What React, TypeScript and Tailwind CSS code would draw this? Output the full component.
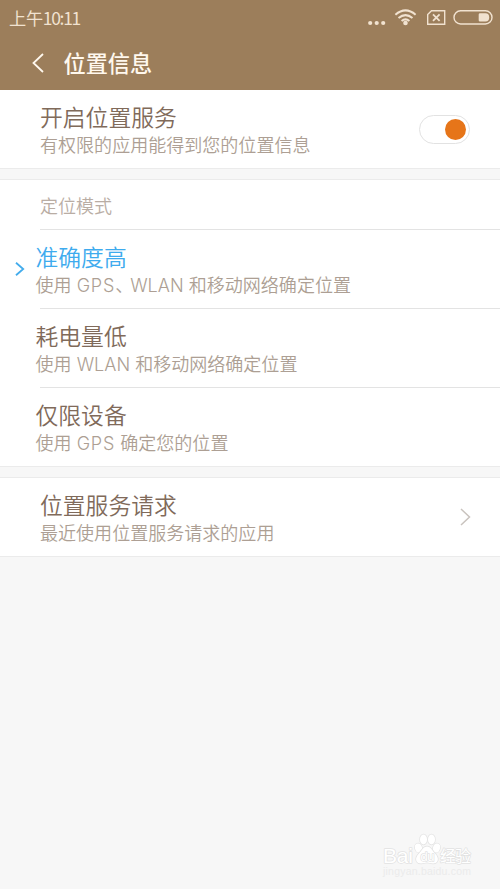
import React from "react";

const cjk = "font-['Noto_Sans_CJK_SC',sans-serif]";
const mixed = "font-['Inter','Noto_Sans_CJK_SC',sans-serif]";

function StatusBar() {
  return (
    <div className="flex h-9 items-center justify-between pr-[7px] pl-[9px] text-[#f1e2d0]">
      <span className="text-[17.2px] leading-6 tracking-[-0.3px] font-['Noto_Sans_CJK_SC',sans-serif]">
        上午<span className="text-[17.5px] tracking-[-1.3px]">10:11</span>
      </span>
      <svg width="128" height="24" viewBox="0 0 128 24" fill="none" stroke="currentColor">
        <g fill="currentColor" stroke="none">
          <circle cx="5.2" cy="17" r="2.1" />
          <circle cx="11.7" cy="17" r="2.1" />
          <circle cx="18.2" cy="17" r="2.1" />
          <circle cx="40.5" cy="17" r="2.3" />
          <path d="M115 7.3h5.5q3.7 0 3.7 4.1t-3.7 4.1H115q-1.3 0-1.3-1.2V8.5q0-1.2 1.3-1.2z" />
        </g>
        <g strokeWidth="2">
          <path d="M30.4 8.7Q40.5 .1 50.6 8.7" />
          <path d="M33.5 12Q40.5 6.2 47.5 12" />
          <path d="M36.6 15Q40.5 11.8 44.4 15" />
        </g>
        <path strokeWidth="1.4" d="M66.5 4.7H79.7V18.3H62.7V8.5Z" />
        <path strokeWidth="1.8" d="m68 8.3 6.6 6.6m0-6.6L68 14.9" />
        <rect x="89" y="4.8" width="38" height="13.2" rx="6.6" strokeWidth="1.4" />
      </svg>
    </div>
  );
}

function Label({ title, detail, active = false }: { title: string; detail: React.ReactNode; active?: boolean }) {
  return (
    <div className="pt-[7px]">
      <div className={`${cjk} text-[22.8px] leading-[27px] font-[350] ${active ? "text-[#3eabee]" : "text-[#806a5a]"}`}>
        {title}
      </div>
      <div className={`${mixed} text-[18.05px] leading-[32px] font-[350] whitespace-nowrap text-[#ad9f94]`}>{detail}</div>
    </div>
  );
}

function Row({ title, detail, active = false }: { title: string; detail: React.ReactNode; active?: boolean }) {
  return (
    <div className="flex h-[78px] items-center">
      <div className="flex w-[35.5px] shrink-0 justify-end pr-[11px]">
        {active && (
          <svg width="10" height="14" viewBox="0 0 10 14" fill="none" stroke="#43acec" strokeWidth="1.8">
            <path d="m1 .8 7.2 6.2L1 13.2" />
          </svg>
        )}
      </div>
      <Label title={title} detail={detail} active={active} />
    </div>
  );
}

const Divider = () => <div className="ml-10 h-px bg-[#e3e3e3]" />;

const Gps = () => <span className="tracking-[0.8px]">GPS</span>;

function Watermark() {
  return (
    <svg width="92" height="48" viewBox="0 0 92 48" className="absolute right-[26px] bottom-[8px]">
      <g fill="#ffffff" stroke="#e2e2e2" strokeWidth="1.4" paintOrder="stroke" strokeLinejoin="round">
        <text x="1" y="30" fontSize="21" fontWeight="400" fontFamily="Liberation Sans" textLength="30">Bai</text>
        <ellipse cx="36.5" cy="15" rx="3.5" ry="4.6" transform="rotate(-15 36.5 15)" />
        <ellipse cx="41.5" cy="6.5" rx="3.5" ry="5" />
        <ellipse cx="49.5" cy="6.5" rx="3.5" ry="5" />
        <ellipse cx="54.5" cy="15" rx="3.5" ry="4.6" transform="rotate(15 54.5 15)" />
        <path d="M45 13.5c4 0 5 4 8 7 5 5 3 10-2 10-3 0-4-1-6-1s-3 1-6 1c-5 0-7-5-2-10 3-3 4-7 8-7Z" />
        <text x="38.5" y="28" fontSize="13" fontWeight="400" fontFamily="Liberation Sans" textLength="14">du</text>
        <text x="58" y="29" fontSize="16" fontWeight="400" fontFamily="Noto Sans CJK SC" textLength="31">经验</text>
      </g>
      <text x="1" y="42" fontSize="10.5" fill="#ebebeb" fontFamily="Liberation Sans" textLength="88">jingyan.baidu.com</text>
    </svg>
  );
}

export default function App() {
  return (
    <main className="relative h-[889px] w-[500px] overflow-hidden bg-[#f7f7f7]">
      <header className="h-[90px] bg-[#9c7e5b]">
        <StatusBar />
        <div className="flex h-[54px] items-center pl-8">
          <svg width="12" height="20" viewBox="0 0 12 20" fill="none" stroke="#fff8ee" strokeWidth="1.8">
            <path d="M11 1 1.5 10 11 19" />
          </svg>
          <h1 className={`${cjk} -mt-[2px] ml-[19.5px] text-[22.2px] leading-8 font-medium text-[#fff8ee]`}>位置信息</h1>
        </div>
      </header>

      <section className="flex h-[79px] items-center justify-between border-b border-[#ebebeb] bg-white pr-[30px] pl-10">
        <Label title="开启位置服务" detail="有权限的应用能得到您的位置信息" />
        <div className="flex h-[29px] w-[51px] items-center justify-end rounded-full border border-[#e2e2e2] pr-[3px]">
          <div className="size-[21px] rounded-full bg-[#e67519]" />
        </div>
      </section>

      <section className="mt-[10px] border-y border-[#ebebeb] bg-white">
        <div className={`${mixed} flex h-[49px] items-center pt-[4px] pl-10 text-[18px] leading-7 font-[350] text-[#b9ada4]`}>定位模式</div>
        <Divider />
        <Row
          title="准确度高"
          detail={<>使用 <Gps /><span className="mr-[6px] [font-feature-settings:'halt']">、</span>WLAN 和移动网络确定位置</>}
          active
        />
        <Divider />
        <Row title="耗电量低" detail="使用 WLAN 和移动网络确定位置" />
        <Divider />
        <Row title="仅限设备" detail={<>使用 <Gps /> 确定您的位置</>} />
      </section>

      <section className="mt-[10px] flex h-[80px] items-center justify-between border-y border-[#ebebeb] bg-white pr-[29px] pl-10">
        <Label title="位置服务请求" detail="最近使用位置服务请求的应用" />
        <svg width="11" height="18" viewBox="0 0 11 18" fill="none" stroke="#c9c3be" strokeWidth="1.5">
          <path d="m1 1 8.5 8L1 17" />
        </svg>
      </section>
      <Watermark />
    </main>
  );
}
